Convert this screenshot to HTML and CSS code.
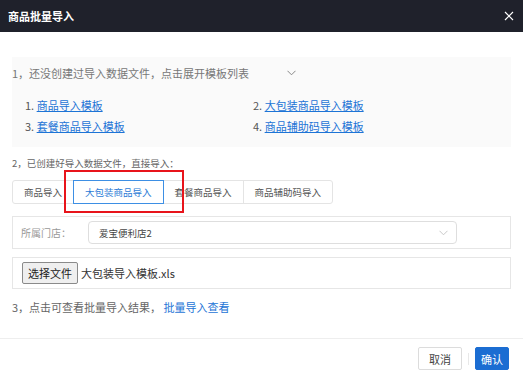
FILE: index.html
```html
<!DOCTYPE html>
<html lang="zh-CN">
<head>
    <meta charset="UTF-8">
    <meta name="viewport" content="width=device-width, initial-scale=1.0">
    <title>商品批量导入</title>
    <link rel="stylesheet" href="styles.css">
</head>
<body>
    <div class="dialog">
        <div class="dialog-header">
            <span class="dialog-title">商品批量导入</span>
            <svg class="close-icon" width="10" height="10" viewBox="0 0 10 10">
                <path d="M1 1 L9 9 M9 1 L1 9" stroke="#ffffff" stroke-width="1.2" fill="none"/>
            </svg>
        </div>

        <div class="dialog-body">
            <div class="template-box">
                <div class="step-line">
                    <span>1，还没创建过导入数据文件，点击展开模板列表</span>
                    <svg class="chevron" width="9" height="6" viewBox="0 0 9 6">
                        <path d="M0.5 0.8 L4.5 4.8 L8.5 0.8" stroke="#888" stroke-width="1" fill="none"/>
                    </svg>
                </div>
                <div class="template-list">
                    <div class="template-item">1. <a href="#">商品导入模板</a></div>
                    <div class="template-item">2. <a href="#">大包装商品导入模板</a></div>
                    <div class="template-item">3. <a href="#">套餐商品导入模板</a></div>
                    <div class="template-item">4. <a href="#">商品辅助码导入模板</a></div>
                </div>
            </div>

            <div class="step-two">2，已创建好导入数据文件，直接导入：</div>

            <div class="tabs">
                <span class="tab">商品导入</span>
                <span class="tab active">大包装商品导入</span>
                <span class="tab">套餐商品导入</span>
                <span class="tab divided">商品辅助码导入</span>
                <span class="mark"></span>
            </div>

            <div class="store-row">
                <span class="store-label">所属门店：</span>
                <div class="store-select">
                    <span>爱宝便利店2</span>
                    <svg width="9" height="6" viewBox="0 0 9 6">
                        <path d="M0.5 0.8 L4.5 4.8 L8.5 0.8" stroke="#c8c8c8" stroke-width="1" fill="none"/>
                    </svg>
                </div>
            </div>

            <div class="file-row">
                <button class="file-btn">选择文件</button>
                <span class="file-name">大包装导入模板.xls</span>
            </div>

            <div class="step-three">3，点击可查看批量导入结果， <a href="#">批量导入查看</a></div>
        </div>

        <div class="dialog-footer">
            <button class="btn btn-cancel">取消</button>
            <span class="btn-sep"></span>
            <button class="btn btn-ok">确认</button>
        </div>
    </div>
</body>
</html>
```

FILE: styles.css
```css
* {
    box-sizing: border-box;
    font-family: "Noto Sans CJK SC", "Liberation Sans", sans-serif;
}

body {
    margin: 0;
    padding: 0;
    background-color: #ffffff;
    color: #666;
}

.dialog {
    width: 523px;
    height: 373px;
    overflow: hidden;
}

.dialog-header {
    height: 32px;
    background-color: #1f212b;
    display: flex;
    align-items: center;
    justify-content: space-between;
    padding: 0 9px 0 8px;
}

.dialog-title {
    color: #ffffff;
    font-size: 11px;
    font-weight: bold;
}

.dialog-body {
    padding: 25px 12px 0;
}

.template-box {
    background-color: #fafafa;
    padding-bottom: 10px;
}

.step-line {
    display: flex;
    align-items: center;
    height: 32px;
    font-size: 11px;
    color: #777;
}

.step-line .chevron {
    margin-left: 38px;
}

.template-list {
    display: grid;
    grid-template-columns: 228px auto;
    padding: 6px 0 0 13px;
}

.template-item {
    font-size: 11px;
    line-height: 21px;
    color: #555;
}

.template-item a {
    color: #1d74d6;
    text-decoration: underline;
}

.step-two {
    margin-top: 8px;
    font-size: 9.5px;
    line-height: 17px;
    color: #666;
}

.tabs {
    position: relative;
    display: inline-flex;
    margin-top: 8px;
    height: 24px;
    border: 1px solid #e4e4e4;
    border-radius: 3px;
}

.tab {
    display: flex;
    align-items: center;
    padding: 0 11px;
    font-size: 9.5px;
    color: #555;
}

.tab.active {
    margin: -1px 0;
    border: 1px solid #3d8fe4;
    color: #2b7bd6;
    background-color: #ffffff;
}

.tab.divided {
    border-left: 1px solid #e4e4e4;
}

.mark {
    position: absolute;
    left: 51px;
    top: -11px;
    width: 120px;
    height: 43px;
    border: 2px solid #e8141b;
}

.store-row {
    display: flex;
    align-items: center;
    margin-top: 12px;
    height: 33px;
    border: 1px solid #e6e6e6;
    padding-left: 8px;
}

.store-label {
    width: 67px;
    font-size: 10px;
    color: #999;
}

.store-select {
    display: flex;
    align-items: center;
    justify-content: space-between;
    width: 369px;
    height: 23px;
    border: 1px solid #dedede;
    border-radius: 4px;
    padding: 0 8px 0 10px;
    font-size: 9.5px;
    color: #444;
}

.file-row {
    display: flex;
    align-items: center;
    margin-top: 8px;
    height: 32px;
    border: 1px solid #e6e6e6;
    padding-left: 9px;
}

.file-btn {
    height: 22px;
    width: 56px;
    padding: 0;
    font-size: 11px;
    color: #222;
    background-color: #efefef;
    border: 1px solid #8a8a8a;
    border-radius: 2px;
}

.file-name {
    margin-left: 3px;
    font-size: 11px;
    color: #333;
}

.step-three {
    margin-top: 9px;
    font-size: 11px;
    line-height: 18px;
    color: #666;
}

.step-three a {
    color: #1d74d6;
    text-decoration: none;
}

.dialog-footer {
    display: flex;
    align-items: center;
    justify-content: flex-end;
    margin-top: 22px;
    border-top: 1px solid #eeeeee;
    padding: 8px 14px 0 0;
}

.btn {
    height: 23px;
    padding: 0;
    font-size: 11px;
    border-radius: 2px;
}

.btn-cancel {
    width: 44px;
    background-color: #ffffff;
    border: 1px solid #dcdcdc;
    color: #444;
}

.btn-sep {
    width: 1px;
    height: 12px;
    margin: 0 6px;
    background-color: #e8e8e8;
}

.btn-ok {
    width: 34px;
    background-color: #1b6dd2;
    border: 1px solid #1b6dd2;
    color: #ffffff;
}
```
